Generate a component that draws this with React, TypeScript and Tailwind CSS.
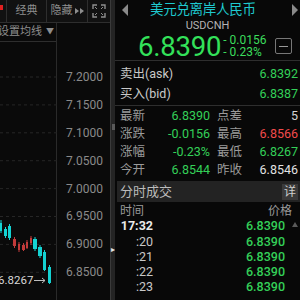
import React from "react";

const FONT = "font-['Roboto','Noto_Sans_CJK_SC',sans-serif]";

const priceLevels = ["7.2000", "7.1500", "7.1000", "7.0500", "7.0000", "6.9500", "6.9000", "6.8500"];

// chart candles in page coordinates (chart body starts at y=42)
const candles = [
  { x: 0, w: 2, t: 223, b: 231, hi: 220, lo: 233, up: true },
  { x: 4, w: 3, t: 229, b: 236, hi: 227, lo: 238, up: true },
  { x: 8, w: 3, t: 226, b: 238, hi: 224, lo: 240, up: true },
  { x: 13, w: 3, t: 239, b: 246, hi: 237, lo: 248, up: false },
  { x: 18, w: 2, t: 244, b: 250, hi: 242, lo: 252, up: false },
  { x: 22, w: 3, t: 245, b: 250, hi: 243, lo: 251, up: false },
  { x: 26, w: 2, t: 242, b: 248, hi: 240, lo: 249, up: false },
  { x: 30, w: 2, t: 238, b: 243, hi: 236, lo: 245, up: false },
  { x: 33, w: 4, t: 239, b: 249, hi: 237, lo: 251, up: true },
  { x: 38, w: 4, t: 247, b: 256, hi: 245, lo: 258, up: true },
  { x: 43, w: 3, t: 252, b: 270, hi: 250, lo: 271, up: true },
  { x: 48, w: 3, t: 267, b: 283, hi: 265, lo: 284, up: true },
];

const stats = [
  { l1: "最新", v1: "6.8390", l2: "点差", v2: "5", c2: "text-[#d4d4d4]" },
  { l1: "涨跌", v1: "-0.0156", l2: "最高", v2: "6.8566", c2: "text-[#f24b4b]" },
  { l1: "涨幅", v1: "-0.23%", l2: "最低", v2: "6.8267", c2: "text-[#34d058]" },
  { l1: "今开", v1: "6.8544", l2: "昨收", v2: "6.8546", c2: "text-[#e2e2e2]" },
];

const ticks = ["17:32", ":20", ":21", ":22", ":23"];

function LeftPanel() {
  return (
    <div className="w-[110px] h-full flex flex-col">
      {/* toolbar */}
      <div className="h-[23px] flex items-stretch border-b border-[#2e2e2e] bg-[#111]">
        <div className="w-[7px] border-r border-[#2e2e2e] flex items-start pt-[5px]">
          <div className="w-[3px] h-[5px] bg-[#e02020]" />
        </div>
        <div className="w-[40px] border-r border-[#2e2e2e] flex items-center justify-center text-[11px] text-[#8e8e8e]">
          经典
        </div>
        <div className="w-[41px] border-r border-[#2e2e2e] flex items-center justify-center gap-[2px] text-[11px] text-[#8e8e8e]">
          <span>隐藏</span>
          <svg width="9" height="6" viewBox="0 0 9 6">
            <path d="M0 0 L4 3 L0 6Z M5 0 L9 3 L5 6Z" fill="#8e8e8e" />
          </svg>
        </div>
        <div className="flex-1 flex items-center justify-center">
          <svg width="14" height="14" viewBox="0 0 14 14" fill="none" stroke="#8e8e8e" strokeWidth="1.4">
            <path d="M1 5V1h4 M9 1h4v4 M13 9v4H9 M5 13H1V9" />
            <path d="M3 3l2 2 M11 3L9 5 M11 11L9 9 M3 11l2-2" strokeWidth="1" />
          </svg>
        </div>
      </div>
      {/* chart + axis */}
      <div className="flex-1 flex">
        <div className="w-[57px] border-r border-[#2a2a2a] flex flex-col">
          <div className="h-[19px] border-b border-[#2e2e2e] flex items-center gap-[4px] text-[11px] text-[#8e8e8e] -ml-[2px]">
            <span>设置均线</span>
            <span className="text-[8px]">▼</span>
          </div>
          <div className="relative flex-1">
            <svg width="57" height="258" viewBox="0 42 57 258" className="block">
              {priceLevels.map((_, i) => (
                <line
                  key={i}
                  x1="0"
                  x2="57"
                  y1={77 + i * 27.9}
                  y2={77 + i * 27.9}
                  stroke="#262626"
                  strokeDasharray="3 3"
                />
              ))}
              {candles.map((c, i) => (
                <g key={i} fill={c.up ? "#14d2d2" : "#c23a3a"} stroke={c.up ? "#14d2d2" : "#c23a3a"}>
                  <line x1={c.x + c.w / 2} x2={c.x + c.w / 2} y1={c.hi} y2={c.lo} strokeWidth="1" />
                  <rect x={c.x} y={c.t} width={c.w} height={c.b - c.t} stroke="none" />
                </g>
              ))}
            </svg>
            <div className="absolute left-[-2px] top-[233px] flex items-center gap-[1px] text-[11.5px] leading-none text-[#d8d8d8]">
              <span>6.8267</span>
              <svg width="13" height="7" viewBox="0 0 13 7" fill="none" stroke="#bdbdbd" strokeWidth="1">
                <path d="M0 3.5h11 M8 1l3 2.5L8 6" />
              </svg>
            </div>
          </div>
        </div>
        <div className="flex-1 flex flex-col pt-[40px]">
          {priceLevels.map((p) => (
            <div key={p} className="h-[27.9px] flex items-center justify-end pr-[7px] text-[12px] text-[#8a8a8a]">
              {p}
            </div>
          ))}
        </div>
      </div>
    </div>
  );
}

function Strip() {
  return (
    <div className="w-[5px] h-full bg-[#242424] border-l border-[#3a3a3a] flex flex-col items-center">
      <div className="mt-[124px] w-[3px] h-[6px] bg-[#5a5a5a]" />
      <div className="mt-[116px] text-[8px] leading-none text-[#e6e6e6]">▸</div>
    </div>
  );
}

function RightPanel() {
  return (
    <div className="flex-1 h-full flex flex-col bg-[#080808]">
      {/* header */}
      <div className="h-[61px] border-b border-[#2e2e2e] flex flex-col">
        <div className="h-[22px] flex items-center pl-[7px] pr-[2px]">
          <svg width="6" height="12" viewBox="0 0 6 12">
            <path d="M6 0 L0 6 L6 12Z" fill="#8a8a8a" />
          </svg>
          <span className="ml-[22px] text-[13.5px] leading-none text-[#1fc9cf] tracking-[-0.3px]">美元兑离岸人民币</span>
          <svg className="ml-auto" width="6" height="12" viewBox="0 0 6 12">
            <path d="M0 0 L6 6 L0 12Z" fill="#8a8a8a" />
          </svg>
        </div>
        <div className="h-[11px] flex items-center justify-center text-[11px] leading-none text-[#b4b4b4]">USDCNH</div>
        <div className="flex-1 flex items-center pl-[23px] pr-[8px] pt-[2px]">
          <span className="text-[27.5px] leading-none text-[#33e15a] tracking-[-0.2px]">6.8390</span>
          <div className="ml-[2px] flex flex-col text-[12px] leading-[12px] text-[#3bdc5c]">
            <span>- 0.0156</span>
            <span>- 0.23%</span>
          </div>
          <div className="ml-auto w-[17px] h-[16px] border border-[#777] rounded-[2px] flex items-center justify-center">
            <div className="w-[9px] h-[1.5px] bg-[#999]" />
          </div>
        </div>
      </div>
      {/* ask / bid */}
      <div className="pt-[3px] pb-[1px] border-b border-[#2e2e2e] pl-[5px] pr-[2px] text-[12.5px]">
        <div className="h-[20px] flex items-center justify-between">
          <span className="text-[#c8c8c8]">卖出(ask)</span>
          <span className="text-[#34d058]">6.8392</span>
        </div>
        <div className="h-[20px] flex items-center justify-between">
          <span className="text-[#c8c8c8]">买入(bid)</span>
          <span className="text-[#34d058]">6.8387</span>
        </div>
      </div>
      {/* stats */}
      <div className="pt-[1px] pl-[5px] pr-[2px] text-[12.5px]">
        {stats.map((s) => (
          <div key={s.l1} className="h-[18px] grid grid-cols-[30px_60px_37px_1fr] items-center">
            <span className="text-[#9a9a9a]">{s.l1}</span>
            <span className="text-right text-[#34d058]">{s.v1}</span>
            <span className="pl-[7px] text-[#9a9a9a]">{s.l2}</span>
            <span className={`text-right ${s.c2}`}>{s.v2}</span>
          </div>
        ))}
      </div>
      {/* ticks header */}
      <div className="mt-[2px] ml-[2px] h-[21px] bg-[#232323] flex items-center pl-[3px] pr-[2px]">
        <span className="text-[13px] text-[#bcbcbc]">分时成交</span>
        <span className="ml-auto w-[16px] h-[16px] bg-[#3a3a3a] flex items-center justify-center text-[12px] text-[#d0d0d0]">
          详
        </span>
      </div>
      <div className="h-[17px] flex items-center justify-between pl-[5px] pr-[8px] text-[12px] text-[#9a9a9a]">
        <span>时间</span>
        <span>价格</span>
      </div>
      <div className="relative flex flex-col text-[12.5px]">
        {ticks.map((t, i) => (
          <div key={t} className="h-[15.3px] flex items-center pr-[15px]">
            <span
              className={`w-[38px] text-right ${i === 0 ? "font-bold text-[#eaeaea]" : "text-[#c8c8c8]"}`}
            >
              {t}
            </span>
            <span className="ml-auto font-medium text-[#34d058]">6.8390</span>
          </div>
        ))}
        <svg className="absolute right-[2px] top-[3px]" width="6" height="5" viewBox="0 0 6 5">
          <path d="M0 5 L3 0 L6 5Z" fill="#5a5a5a" />
        </svg>
      </div>
    </div>
  );
}

export default function App() {
  return (
    <div className={`w-[300px] h-[300px] overflow-hidden bg-[#0a0a0a] flex ${FONT}`}>
      <LeftPanel />
      <Strip />
      <RightPanel />
    </div>
  );
}
